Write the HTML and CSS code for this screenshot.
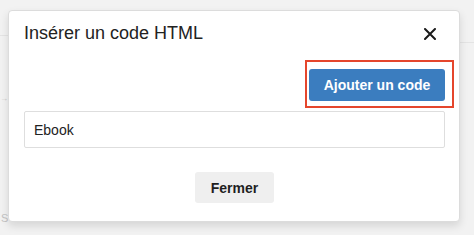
FILE: index.html
```html
<!DOCTYPE html>
<html lang="fr">
<head>
  <meta charset="UTF-8">
  <meta name="viewport" content="width=device-width, initial-scale=1.0">
  <title>Insérer un code HTML</title>
  <link rel="stylesheet" href="styles.css">
</head>
<body>
  <div class="backdrop">
    <div class="bg-line bg-line-top"></div>
    <div class="bg-line bg-line-right"></div>
    <span class="bg-arrow">&rarr;</span>
    <span class="bg-letter">S</span>
  </div>

  <div class="modal">
    <div class="modalHeader">
      <h3>Insérer un code HTML</h3>
      <button class="closeBtn" aria-label="Fermer">
        <svg width="12" height="12" viewBox="0 0 12 12">
          <path d="M1 1 L11 11 M11 1 L1 11" stroke="#1a1a1a" stroke-width="2" stroke-linecap="round"/>
        </svg>
      </button>
    </div>

    <div class="modalActions">
      <button class="btnPrimary">Ajouter un code</button>
      <span class="highlight"></span>
    </div>

    <input type="text" class="codeInput" value="Ebook">

    <div class="modalFooter">
      <button class="btnDefault">Fermer</button>
    </div>
  </div>
</body>
</html>
```

FILE: styles.css
```css
* {
  margin: 0;
  padding: 0;
  box-sizing: border-box;
  font-family: "Liberation Sans", Arial, sans-serif;
}
body {
  background: #f2f2f2;
  width: 474px;
  height: 235px;
  overflow: hidden;
  position: relative;
}
.backdrop {
  position: absolute;
  inset: 0;
}
.bg-line {
  position: absolute;
  background: #e4e4e4;
  height: 1px;
}
.bg-line-top {
  left: 0;
  top: 35px;
  width: 8px;
}
.bg-line-right {
  right: 0;
  top: 42px;
  width: 14px;
}
.bg-arrow {
  position: absolute;
  left: 0;
  top: 94px;
  font-size: 8px;
  color: #c8c8c8;
}
.bg-letter {
  position: absolute;
  left: 1px;
  top: 212px;
  font-size: 11px;
  color: #c4c4c4;
}
.modal {
  position: relative;
  margin: 10px 0 0 8px;
  width: 452px;
  height: 212px;
  background: #fff;
  border: 1px solid #dcdcdc;
  border-radius: 4px;
  box-shadow: 0 4px 8px rgba(0,0,0,0.12);
  padding: 0 14px 0 15px;
  display: flex;
  flex-direction: column;
}
.modalHeader {
  display: flex;
  align-items: center;
  justify-content: space-between;
  padding-top: 10px;
  height: 34px;
}
.modalHeader h3 {
  font-size: 18px;
  font-weight: normal;
  color: #222;
  line-height: 24px;
}
.closeBtn {
  border: none;
  background: none;
  width: 12px;
  height: 12px;
  margin-right: 9px;
  margin-top: 2px;
  display: flex;
  cursor: pointer;
}
.modalActions {
  position: relative;
  display: flex;
  justify-content: flex-end;
  margin-top: 24px;
}
.btnPrimary {
  width: 136px;
  height: 32px;
  border: none;
  border-radius: 3px;
  background: #3b7dbf;
  color: #fff;
  font-size: 14px;
  font-weight: bold;
  cursor: pointer;
}
.highlight {
  position: absolute;
  right: -9px;
  top: -9px;
  width: 149px;
  height: 48px;
  border: 2px solid #e5462c;
  pointer-events: none;
}
.codeInput {
  margin-top: 10px;
  height: 37px;
  width: 100%;
  border: 1px solid #dedede;
  border-radius: 2px;
  padding: 0 9px;
  font-size: 14px;
  color: #222;
  outline: none;
}
.modalFooter {
  display: flex;
  justify-content: center;
  margin-top: 24px;
}
.btnDefault {
  width: 79px;
  height: 31px;
  border: none;
  border-radius: 3px;
  background: #efefef;
  color: #1f1f1f;
  font-size: 14px;
  font-weight: bold;
  cursor: pointer;
}
```
